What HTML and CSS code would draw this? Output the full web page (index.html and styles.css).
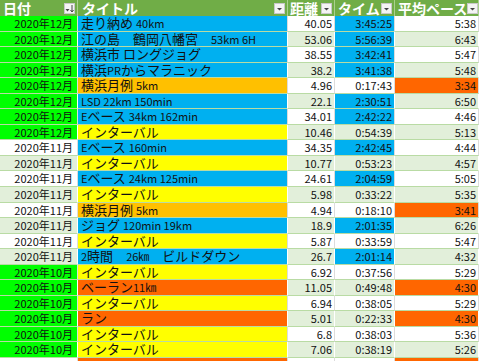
FILE: index.html
```html
<!DOCTYPE html>
<html lang="ja">
<head>
<meta charset="utf-8">
<link rel="stylesheet" href="styles.css">
</head>
<body>
<div class="sheet">
  <div class="row head">
    <div class="h"><span class="ht">日付</span><span class="dd"><svg width="11" height="11" viewBox="0 0 11 11"><polygon points="1.5,6 5.5,6 3.5,8.5" fill="#444"/><line x1="8" y1="2" x2="8" y2="9" stroke="#444" stroke-width="1"/><polyline points="6.5,7 8,9 9.5,7" fill="none" stroke="#444" stroke-width="1"/></svg></span></div>
    <div class="h h2"><span class="ht">タイトル</span><span class="dd"><svg width="11" height="11" viewBox="0 0 11 11"><polygon points="3,5 8,5 5.5,7.5" fill="#444"/></svg></span></div>
    <div class="h h3"><span class="ht">距離</span><span class="dd"><svg width="11" height="11" viewBox="0 0 11 11"><polygon points="3,5 8,5 5.5,7.5" fill="#444"/></svg></span></div>
    <div class="h"><span class="ht">タイム</span><span class="dd"><svg width="11" height="11" viewBox="0 0 11 11"><polygon points="3,5 8,5 5.5,7.5" fill="#444"/></svg></span></div>
    <div class="h"><span class="ht">平均ペース</span><span class="dd"><svg width="11" height="11" viewBox="0 0 11 11"><polygon points="3,5 8,5 5.5,7.5" fill="#444"/></svg></span></div>
  </div>

  <div class="row w"><div class="c d g">2020年12月</div><div class="c t b">走り納め <span class="l">40km</span></div><div class="c n">40.05</div><div class="c n b">3:45:25</div><div class="c n">5:38</div></div>
  <div class="row s"><div class="c d g">2020年12月</div><div class="c t b">江の島　鶴岡八幡宮　<span class="l">53km 6H</span></div><div class="c n">53.06</div><div class="c n b">5:56:39</div><div class="c n">6:43</div></div>
  <div class="row w"><div class="c d g">2020年12月</div><div class="c t b">横浜市 ロングジョグ</div><div class="c n">38.55</div><div class="c n b">3:42:41</div><div class="c n">5:47</div></div>
  <div class="row s"><div class="c d g">2020年12月</div><div class="c t b">横浜<span class="l">PR</span>からマラニック</div><div class="c n">38.2</div><div class="c n b">3:41:38</div><div class="c n">5:48</div></div>
  <div class="row w"><div class="c d g">2020年12月</div><div class="c t o">横浜月例 <span class="l">5km</span></div><div class="c n">4.96</div><div class="c n">0:17:43</div><div class="c n r">3:34</div></div>
  <div class="row s"><div class="c d g">2020年12月</div><div class="c t b"><span class="l">LSD 22km 150min</span></div><div class="c n">22.1</div><div class="c n b">2:30:51</div><div class="c n">6:50</div></div>
  <div class="row w"><div class="c d g">2020年12月</div><div class="c t b"><span class="l">E</span>ベース <span class="l">34km 162min</span></div><div class="c n">34.01</div><div class="c n b">2:42:22</div><div class="c n">4:46</div></div>
  <div class="row s"><div class="c d g">2020年12月</div><div class="c t y">インターバル</div><div class="c n">10.46</div><div class="c n">0:54:39</div><div class="c n">5:13</div></div>

  <div class="row w"><div class="c d">2020年11月</div><div class="c t b"><span class="l">E</span>ベース <span class="l">160min</span></div><div class="c n">34.35</div><div class="c n b">2:42:45</div><div class="c n">4:44</div></div>
  <div class="row s"><div class="c d">2020年11月</div><div class="c t y">インターバル</div><div class="c n">10.77</div><div class="c n">0:53:23</div><div class="c n">4:57</div></div>
  <div class="row w"><div class="c d">2020年11月</div><div class="c t b"><span class="l">E</span>ベース <span class="l">24km 125min</span></div><div class="c n">24.61</div><div class="c n b">2:04:59</div><div class="c n">5:05</div></div>
  <div class="row s"><div class="c d">2020年11月</div><div class="c t y">インターバル</div><div class="c n">5.98</div><div class="c n">0:33:22</div><div class="c n">5:35</div></div>
  <div class="row w"><div class="c d">2020年11月</div><div class="c t o">横浜月例 <span class="l">5km</span></div><div class="c n">4.94</div><div class="c n">0:18:10</div><div class="c n r">3:41</div></div>
  <div class="row s"><div class="c d">2020年11月</div><div class="c t b">ジョグ <span class="l">120min 19km</span></div><div class="c n">18.9</div><div class="c n b">2:01:35</div><div class="c n">6:26</div></div>
  <div class="row w"><div class="c d">2020年11月</div><div class="c t y">インターバル</div><div class="c n">5.87</div><div class="c n">0:33:59</div><div class="c n">5:47</div></div>
  <div class="row s"><div class="c d">2020年11月</div><div class="c t b"><span class="l">2</span>時間　<span class="l">26㎞</span>　ビルドダウン</div><div class="c n">26.7</div><div class="c n b">2:01:14</div><div class="c n">4:32</div></div>

  <div class="row w"><div class="c d g">2020年10月</div><div class="c t y">インターバル</div><div class="c n">6.92</div><div class="c n">0:37:56</div><div class="c n">5:29</div></div>
  <div class="row s"><div class="c d g">2020年10月</div><div class="c t r">ベーラン<span class="l">11㎞</span></div><div class="c n">11.05</div><div class="c n">0:49:48</div><div class="c n r">4:30</div></div>
  <div class="row w"><div class="c d g">2020年10月</div><div class="c t y">インターバル</div><div class="c n">6.94</div><div class="c n">0:38:05</div><div class="c n">5:29</div></div>
  <div class="row s"><div class="c d g">2020年10月</div><div class="c t r">ラン</div><div class="c n">5.01</div><div class="c n">0:22:33</div><div class="c n r">4:30</div></div>
  <div class="row w"><div class="c d g">2020年10月</div><div class="c t y">インターバル</div><div class="c n">6.8</div><div class="c n">0:38:03</div><div class="c n">5:36</div></div>
  <div class="row s"><div class="c d g">2020年10月</div><div class="c t y">インターバル</div><div class="c n">7.06</div><div class="c n">0:38:19</div><div class="c n">5:26</div></div>
  <div class="row w"><div class="c d"></div><div class="c t r"></div><div class="c n"></div><div class="c n"></div><div class="c n r"></div></div>
</div>
</body>
</html>
```

FILE: styles.css
```css
html, body {
  margin: 0;
  padding: 0;
  background: #ffffff;
  overflow: hidden;
}

.sheet {
  width: 479px;
  height: 361px;
  overflow: hidden;
  font-family: "Noto Sans CJK JP", "Noto Sans", sans-serif;
  color: #111;
}

.row {
  display: grid;
  grid-template-columns: 78px 210px 47px 60px 84px;
  height: 15.55px;
}

.row.head {
  height: 16px;
  background: #70ad47;
}

.h {
  box-sizing: border-box;
  display: flex;
  align-items: center;
  height: 16px;
  padding-left: 3px;
  padding-right: 2px;
  border-right: 1px solid #a9d08e;
  background: #70ad47;
  color: #ffffff;
  font-weight: bold;
  font-size: 14px;
}

.ht {
  line-height: 16px;
  white-space: nowrap;
}

.h2 {
  padding-left: 4px;
}

.h3 {
  padding-left: 2px;
}

.dd {
  margin-left: auto;
  width: 11px;
  height: 11px;
  flex: none;
  box-sizing: border-box;
  background: #f4f4f4;
  border: 1px solid #c8c8c8;
  display: flex;
  align-items: center;
  justify-content: center;
}

.dd svg {
  display: block;
  flex: none;
}

.c {
  box-sizing: border-box;
  display: block;
  overflow: hidden;
  white-space: nowrap;
  border-right: 1px solid #dcdcdc;
  border-bottom: 1px solid #b9dba4;
  font-size: 11px;
  line-height: 14.5px;
}

.row.s .c {
  background-color: #e2efda;
  border-right-color: #ffffff;
}

.row.w .c {
  background-color: #ffffff;
}

.d {
  text-align: right;
  padding-right: 4px;
}

.t {
  font-size: 13px;
  padding-left: 3px;
}

.t .l {
  font-size: 11px;
}

.n {
  text-align: right;
  padding-right: 2px;
}

.row .c.g { background-color: #00ff00; }
.row .c.b { background-color: #00b0f0; }
.row .c.y { background-color: #ffff00; }
.row .c.o { background-color: #ffc000; }
.row .c.r { background-color: #ff6600; }
```
